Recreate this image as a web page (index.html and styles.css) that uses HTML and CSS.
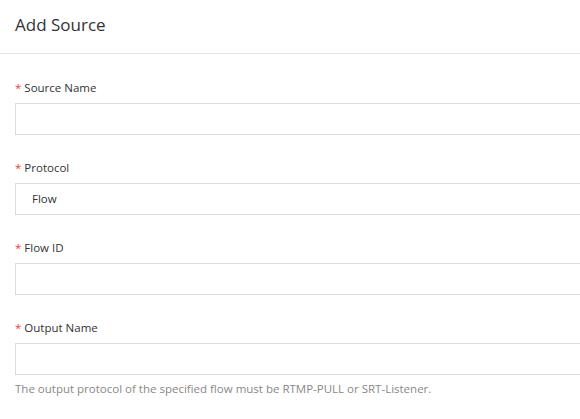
FILE: index.html
```html
<!DOCTYPE html>
<html>
<head>
<meta charset="utf-8">
<link rel="stylesheet" href="styles.css">
</head>
<body>
<div class="panel">
  <header class="header">
    <h1 class="title">Add Source</h1>
  </header>
  <form class="form">
    <div class="field">
      <label class="label"><span class="req">*</span>Source Name</label>
      <div class="input"></div>
    </div>
    <div class="field">
      <label class="label"><span class="req">*</span>Protocol</label>
      <div class="input select">Flow</div>
    </div>
    <div class="field">
      <label class="label"><span class="req">*</span>Flow ID</label>
      <div class="input"></div>
    </div>
    <div class="field last">
      <label class="label"><span class="req">*</span>Output Name</label>
      <div class="input"></div>
      <p class="help">The output protocol of the specified flow must be RTMP-PULL or SRT-Listener.</p>
    </div>
  </form>
</div>
</body>
</html>
```
FILE: styles.css
```css
* { box-sizing: border-box; }
html, body {
  margin: 0;
  padding: 0;
  background: #fff;
  overflow: hidden;
}
body {
  font-family: "Open Sans", "Noto Sans", sans-serif;
  color: #333;
}
.panel {
  width: 580px;
  height: 419px;
  overflow: hidden;
}
.header {
  height: 54px;
  border-bottom: 1px solid #e5e5e5;
  padding: 12px 15px 0;
}
.title {
  margin: 0;
  font-size: 17px;
  font-weight: 400;
  line-height: 25px;
  color: #333;
}
.form {
  padding: 25px 0 0 15px;
  margin-right: -40px;
}
.field {
  margin-bottom: 24px;
}
.field.last { margin-bottom: 0; }
.label {
  display: block;
  height: 18px;
  line-height: 18px;
  font-size: 11.5px;
  color: #333;
  margin-bottom: 6px;
}
.req {
  color: #f0413b;
  margin-right: 3px;
}
.input {
  height: 32px;
  border: 1px solid #dcdcdc;
  background: #fff;
}
.select {
  font-size: 11.5px;
  line-height: 30px;
  padding-left: 16px;
  color: #333;
}
.help {
  margin: 5px 0 0;
  font-size: 11.5px;
  line-height: 18px;
  color: #888;
}
```
